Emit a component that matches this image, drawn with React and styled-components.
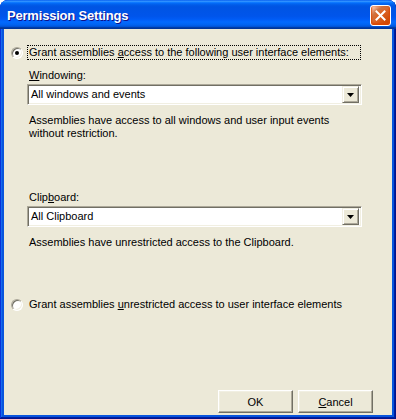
import React from 'react'
import styled, { createGlobalStyle } from 'styled-components'

const GlobalStyle = createGlobalStyle`
    html, body {
        margin: 0;
        padding: 0;
        background: #ffffff;
    }
    body {
        font-family: "Liberation Sans", Arial, sans-serif;
        font-size: 11px;
        color: #000000;
    }
`;

const Window = styled.div`
    width: 396px;
    height: 419px;
    display: flex;
    flex-direction: column;
    border-radius: 8px 8px 0 0;
    overflow: hidden;
    background: #0855dd;
    box-shadow: inset -1px -1px #00138c, inset 1px 1px #0831d9,
        inset -2px -2px #001ea0, inset 2px 2px #166aee;
`;

const TitleBar = styled.div`
    height: 29px;
    flex: none;
    display: flex;
    align-items: flex-start;
    justify-content: space-between;
    padding-left: 7px;
    background: linear-gradient(
        to bottom,
        #0058ee 0%,
        #3593ff 4%,
        #288eff 6%,
        #127dff 8%,
        #036ffc 10%,
        #0262ee 14%,
        #0057e5 20%,
        #0054e3 24%,
        #0055eb 56%,
        #005bf5 66%,
        #026afe 76%,
        #0062ef 86%,
        #0052d6 92%,
        #0040ab 94%,
        #003092 100%
    );
`;

const Title = styled.div`
    margin-top: 8px;
    font-weight: bold;
    font-size: 13px;
    line-height: 15px;
    color: #ffffff;
    text-shadow: 1px 1px #0f1089;
    letter-spacing: -0.2px;
`;

const CloseButton = styled.div`
    width: 21px;
    height: 21px;
    box-sizing: border-box;
    margin: 5px 5px 0 0;
    border: 1px solid #ffffff;
    border-radius: 3px;
    display: flex;
    align-items: center;
    justify-content: center;
    background: radial-gradient(circle at 90% 90%, #cc4600 0%, #dc6527 55%, #cd7546 70%, #ffccb2 90%, #ffffff 100%);
    box-shadow: inset 0 -1px 2px 1px #da4600;
`;

const Client = styled.div`
    flex: 1;
    margin: 0 4px 4px;
    background: #ece9d8;
    display: flex;
    flex-direction: column;
`;

const RadioRow = styled.div`
    display: flex;
    align-items: center;
    height: 15px;
    margin-top: ${p => p.$top}px;
    padding: 0 31px 0 7px;
`;

const RadioCircle = styled.span`
    position: relative;
    flex: none;
    width: 12px;
    height: 12px;
    box-sizing: border-box;
    margin-right: 4px;
    border-radius: 50%;
    border: 1px solid;
    border-color: #aca899 #ffffff #ffffff #aca899;
    background: #ffffff;
    box-shadow: inset 1px 1px 0 #716f64, inset -1px -1px 0 #f1efe2;

    &::after {
        content: '';
        display: ${p => (p.$checked ? 'block' : 'none')};
        position: absolute;
        left: 3px;
        top: 3px;
        width: 4px;
        height: 4px;
        border-radius: 50%;
        background: #000000;
    }
`;

const RadioLabel = styled.label`
    flex: 1;
    line-height: 13px;
    padding: 0 1px;
    border: 1px dotted ${p => (p.$focused ? '#000000' : 'transparent')};
    white-space: nowrap;
`;

const Group = styled.div`
    display: flex;
    flex-direction: column;
    padding: 0 30px 0 23px;
`;

const FieldLabel = styled.div`
    line-height: 13px;
    padding-left: 2px;
    margin-top: ${p => p.$top}px;
`;

const Combo = styled.div`
    height: 21px;
    box-sizing: border-box;
    margin-top: 2px;
    display: flex;
    align-items: center;
    border: 1px solid;
    border-color: #aca899 #ffffff #ffffff #aca899;
    box-shadow: inset 1px 1px 0 #716f64, inset -1px -1px 0 #f1efe2;
    background: #ffffff;
    padding: 2px 2px 2px 3px;
`;

const ComboText = styled.span`
    flex: 1;
    line-height: 13px;
`;

const DropButton = styled.div`
    width: 17px;
    height: 17px;
    box-sizing: border-box;
    display: flex;
    align-items: center;
    justify-content: center;
    background: #ece9d8;
    border: 1px solid;
    border-color: #f1efe2 #716f64 #716f64 #f1efe2;
    box-shadow: inset 1px 1px 0 #ffffff, inset -1px -1px 0 #aca899;
`;

const Description = styled.div`
    line-height: 13px;
    padding-left: 2px;
    margin-top: 9px;
`;

const Footer = styled.div`
    margin-top: auto;
    display: flex;
    justify-content: flex-end;
    gap: 5px;
    padding: 0 19px 2px 0;
`;

const PushButton = styled.button`
    width: 75px;
    height: 23px;
    padding: 0;
    font-family: inherit;
    font-size: 11px;
    color: #000000;
    background: #ece9d8;
    border: 1px solid;
    border-color: #ffffff #716f64 #716f64 #ffffff;
    box-shadow: inset -1px -1px 0 #aca899, inset 1px 1px 0 #f1efe2;
    border-radius: 0;
`;

const Key = styled.span`
    text-decoration: underline;
`;

const DownArrow = () => (
    <svg width="7" height="4" viewBox="0 0 7 4">
        <path d="M0 0h7L3.5 4z" fill="#000" />
    </svg>
);

const CloseGlyph = () => (
    <svg width="11" height="11" viewBox="0 0 11 11">
        <path d="M1.5 1.5l8 8M9.5 1.5l-8 8" stroke="#fff" strokeWidth="2" strokeLinecap="square" />
    </svg>
);

const ComboBox = ({ value }) => (
    <Combo>
        <ComboText>{value}</ComboText>
        <DropButton>
            <DownArrow />
        </DropButton>
    </Combo>
);

const App = () => {
    return (
        <>
            <GlobalStyle />
            <Window>
                <TitleBar>
                    <Title>Permission Settings</Title>
                    <CloseButton>
                        <CloseGlyph />
                    </CloseButton>
                </TitleBar>
                <Client>
                    <RadioRow $top={16}>
                        <RadioCircle $checked />
                        <RadioLabel $focused>
                            Grant assemblies <Key>a</Key>ccess to the following user interface elements:
                        </RadioLabel>
                    </RadioRow>
                    <Group>
                        <FieldLabel $top={9}>
                            <Key>W</Key>indowing:
                        </FieldLabel>
                        <ComboBox value="All windows and events" />
                        <Description>
                            Assemblies have access to all windows and user input events
                            <br />
                            without restriction.
                        </Description>
                        <FieldLabel $top={51}>
                            Clip<Key>b</Key>oard:
                        </FieldLabel>
                        <ComboBox value="All Clipboard" />
                        <Description>Assemblies have unrestricted access to the Clipboard.</Description>
                    </Group>
                    <RadioRow $top={48}>
                        <RadioCircle />
                        <RadioLabel>
                            Grant assemblies <Key>u</Key>nrestricted access to user interface elements
                        </RadioLabel>
                    </RadioRow>
                    <Footer>
                        <PushButton>OK</PushButton>
                        <PushButton>
                            <Key>C</Key>ancel
                        </PushButton>
                    </Footer>
                </Client>
            </Window>
        </>
    );
};

export default App;
